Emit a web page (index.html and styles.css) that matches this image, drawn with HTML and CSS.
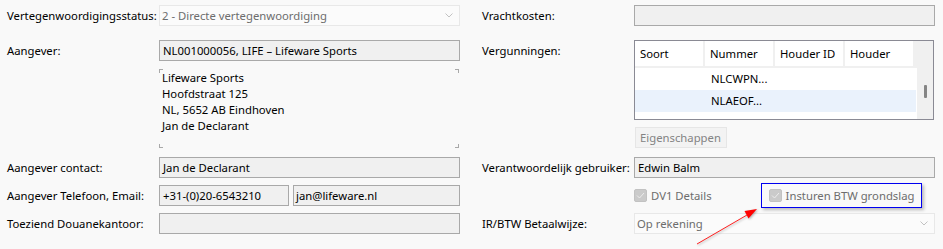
FILE: index.html
```html
<html lang="nl">
	<head>
		<meta charset="UTF-8">
		<meta name="viewport" content="width=device-width, initial-scale=1">
		<title>Aangifte – Aangever</title>
		<link rel="stylesheet" href="styles.css">
	</head>
	<body>
		<div class="form">
			<div class="col">
				<div class="row">
					<span class="lbl">Vertegenwoordigingsstatus:</span>
					<div class="combo">
						<span>2 - Directe vertegenwoordiging</span>
						<svg class="chevron" width="8" height="5" viewBox="0 0 8 5"><path d="M0.5 0.5 L4 4 L7.5 0.5" fill="none" stroke="#c2c2c2"/></svg>
					</div>
				</div>
				<div class="row gap-14">
					<span class="lbl">Aangever:</span>
					<div class="input">NL001000056, LIFE – Lifeware Sports</div>
				</div>
				<div class="row gap-8">
					<span class="lbl"></span>
					<div class="address">Lifeware Sports<br>Hoofdstraat 125<br>NL, 5652 AB Eindhoven<br>Jan de Declarant</div>
				</div>
				<div class="row gap-9">
					<span class="lbl">Aangever contact:</span>
					<div class="input">Jan de Declarant</div>
				</div>
				<div class="row gap-7">
					<span class="lbl">Aangever Telefoon, Email:</span>
					<div class="pair">
						<div class="input phone">+31-(0)20-6543210</div>
						<div class="input">jan@lifeware.nl</div>
					</div>
				</div>
				<div class="row gap-7">
					<span class="lbl">Toeziend Douanekantoor:</span>
					<div class="input"></div>
				</div>
			</div>

			<div class="col">
				<div class="row">
					<span class="lbl">Vrachtkosten:</span>
					<div class="input"></div>
				</div>
				<div class="row gap-14">
					<span class="lbl">Vergunningen:</span>
					<div class="table">
						<div class="thead">
							<span class="th">Soort</span>
							<span class="th">Nummer</span>
							<span class="th">Houder ID</span>
							<span class="th">Houder</span>
							<span class="th-fill"></span>
						</div>
						<div class="tbody">
							<div class="rows">
								<div class="tr"><span class="td"></span><span class="td">NLCWPN...</span></div>
								<div class="tr selected"><span class="td"></span><span class="td">NLAEOF...</span></div>
							</div>
							<div class="track"><span class="thumb"></span></div>
						</div>
					</div>
				</div>
				<div class="row gap-7">
					<span class="lbl"></span>
					<button class="btn" type="button">Eigenschappen</button>
				</div>
				<div class="row gap-9">
					<span class="lbl">Verantwoordelijk gebruiker:</span>
					<div class="input">Edwin Balm</div>
				</div>
				<div class="row gap-7 checks">
					<span class="lbl"></span>
					<label class="check">
						<span class="box"><svg width="9" height="7" viewBox="0 0 9 7"><path d="M1 3.5 L3.5 6 L8 1" fill="none" stroke="#ececec" stroke-width="1"/></svg></span>
						DV1 Details
					</label>
					<label class="check highlight">
						<span class="box"><svg width="9" height="7" viewBox="0 0 9 7"><path d="M1 3.5 L3.5 6 L8 1" fill="none" stroke="#ececec" stroke-width="1"/></svg></span>
						Insturen BTW grondslag
					</label>
				</div>
				<div class="row gap-7">
					<span class="lbl">IR/BTW Betaalwijze:</span>
					<div class="combo">
						<span>Op rekening</span>
						<svg class="chevron" width="8" height="5" viewBox="0 0 8 5"><path d="M0.5 0.5 L4 4 L7.5 0.5" fill="none" stroke="#c2c2c2"/></svg>
					</div>
				</div>
			</div>
		</div>

		<!-- annotation arrow pointing at the highlighted checkbox -->
		<svg class="arrow" width="943" height="249" viewBox="0 0 943 249">
			<line x1="697" y1="244" x2="747" y2="215" stroke="#ff2020" stroke-width="1"/>
			<polygon points="757,209 744.5,211 748.5,218.5" fill="#ff0000"/>
		</svg>
	</body>
</html>
```

FILE: styles.css
```css
body {
	margin: 0;
	background: #f9f9f9;
	font-family: "Noto Sans", sans-serif;
	font-size: 11.3px;
	color: #000;
}
.form {
	display: flex;
	gap: 22px;
	padding: 5px 0 0 7px;
}
.col {
	width: 453px;
	display: flex;
	flex-direction: column;
}
.row {
	display: flex;
	align-items: flex-start;
}
.gap-7 { margin-top: 7px; }
.gap-8 { margin-top: 8px; }
.gap-9 { margin-top: 9px; }
.gap-14 { margin-top: 14px; }

.lbl {
	flex: 0 0 152px;
	line-height: 21px;
	white-space: nowrap;
}
.input {
	width: 301px;
	height: 21px;
	box-sizing: border-box;
	border: 1px solid #a9a9a9;
	background: #f0f0f0;
	padding: 0 3px;
	line-height: 19px;
	white-space: nowrap;
	overflow: hidden;
}
.pair {
	display: flex;
	gap: 4px;
	width: 301px;
}
.pair .input {
	flex: 1;
	width: auto;
	padding: 0 2px;
}
.pair .phone {
	flex: 0 0 130px;
	padding: 0 3px;
}
.combo {
	width: 301px;
	height: 21px;
	box-sizing: border-box;
	border: 1px solid #e8e8e8;
	background: #fbfbfb;
	color: #6d6d6d;
	padding: 0 6px 0 2px;
	line-height: 19px;
	display: flex;
	justify-content: space-between;
	align-items: center;
}
.combo span {
	line-height: 19px;
}
.chevron {
	display: block;
}

/* multi-line address block with corner marks */
.address {
	width: 300px;
	height: 79px;
	box-sizing: border-box;
	padding: 1px 3px;
	line-height: 16px;
	background:
		linear-gradient(#a9a9a9, #a9a9a9) left top / 4px 1px no-repeat,
		linear-gradient(#a9a9a9, #a9a9a9) left top / 1px 4px no-repeat,
		linear-gradient(#a9a9a9, #a9a9a9) right top / 4px 1px no-repeat,
		linear-gradient(#a9a9a9, #a9a9a9) right top / 1px 4px no-repeat,
		linear-gradient(#a9a9a9, #a9a9a9) left bottom / 4px 1px no-repeat,
		linear-gradient(#a9a9a9, #a9a9a9) left bottom / 1px 4px no-repeat,
		linear-gradient(#a9a9a9, #a9a9a9) right bottom / 4px 1px no-repeat,
		linear-gradient(#a9a9a9, #a9a9a9) right bottom / 1px 4px no-repeat;
}

/* permits list */
.table {
	width: 300px;
	height: 80px;
	box-sizing: border-box;
	border: 1px solid #8a8a94;
	background: #fff;
	display: flex;
	flex-direction: column;
}
.thead {
	display: flex;
	height: 27px;
	box-sizing: border-box;
	border-bottom: 2px solid #f0f0f0;
}
.th {
	flex: 0 0 70px;
	box-sizing: border-box;
	border-right: 2px solid #f0f0f0;
	padding-left: 5px;
	line-height: 25px;
}
.th-fill {
	flex: 1;
	background: #f0f0f0;
}
.tbody {
	flex: 1;
	display: flex;
}
.rows {
	flex: 0 0 282px;
}
.tr {
	display: flex;
	height: 22px;
	line-height: 22px;
}
.tr.selected {
	background: #eaf2fc;
	margin-right: 1px;
}
.td {
	flex: 0 0 70px;
	padding-left: 6px;
	box-sizing: border-box;
}
.track {
	flex: 1;
	background: #f0f0f0;
	display: flex;
	justify-content: center;
	padding-left: 1px;
}
.thumb {
	width: 3px;
	height: 13px;
	margin-top: 17px;
	background: #858585;
	border-radius: 1px;
}

.btn {
	width: 92px;
	height: 21px;
	margin: 0 0 0 1px;
	padding: 0 0 0 4px;
	border: 1px solid #e6e6e6;
	background: #f3f3f3;
	color: #838383;
	font: inherit;
	text-align: left;
	line-height: 19px;
}

.checks {
	height: 21px;
	align-items: center;
}
.check {
	display: flex;
	align-items: center;
	gap: 4px;
	color: #6d6d6d;
	white-space: nowrap;
}
.box {
	width: 13px;
	height: 13px;
	box-sizing: border-box;
	border-radius: 2px;
	background: #cacaca;
	border: 1px solid #c2c2c2;
	display: flex;
	align-items: center;
	justify-content: center;
}
.highlight {
	margin-left: 49px;
	width: 161px;
	height: 25px;
	box-sizing: border-box;
	border: 1px solid #0000f0;
	padding: 0 0 0 7px;
	box-shadow: 2px 2px 3px rgba(0, 0, 0, 0.25);
}

.arrow {
	position: absolute;
	left: 0;
	top: 0;
	pointer-events: none;
	filter: drop-shadow(1px 1px 1px rgba(0, 0, 0, 0.3));
}
```
